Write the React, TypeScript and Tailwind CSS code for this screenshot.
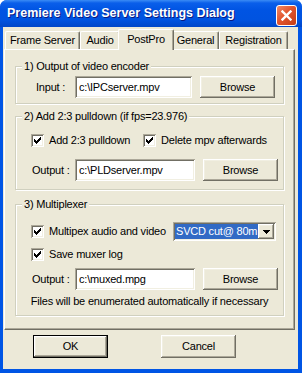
import React from "react";

const raised =
  "bg-[#ece9d8] shadow-[inset_-1px_-1px_0_#716f64,inset_1px_1px_0_#fff,inset_-2px_-2px_0_#aca899,inset_2px_2px_0_#f1efe2]";
const sunken =
  "bg-white shadow-[inset_1px_1px_0_#aca899,inset_-1px_-1px_0_#fff,inset_2px_2px_0_#716f64,inset_-2px_-2px_0_#f1efe2]";

const Check = () => (
  <span className={`w-[13px] h-[13px] flex items-center justify-center shrink-0 ${sunken}`}>
    <svg width="7" height="7" viewBox="0 0 7 7" shapeRendering="crispEdges">
      <path d="M6 0h1v3h-1v1h-1v1h-1v1h-1v1h-1v-1h-1v-1h-1v-3h1v1h1v1h1v-1h1v-1h1z" fill="#000" />
    </svg>
  </span>
);

const Button = ({ children, className = "" }: { children: React.ReactNode; className?: string }) => (
  <div className={`w-[75px] flex items-center justify-center shrink-0 ${raised} ${className}`}>
    {children}
  </div>
);

const TextBox = ({ value, className = "" }: { value: string; className?: string }) => (
  <div className={`h-[22px] flex items-center pl-[4px] shrink-0 ${sunken} ${className}`}>{value}</div>
);

const Group = ({ title, className = "", children }: { title: string; className?: string; children: React.ReactNode }) => (
  <fieldset
    className={`mx-[10px] border border-[#d0d0bf] shadow-[inset_1px_1px_0_#fff,1px_1px_0_#fff] ${className}`}
  >
    <legend className="ml-[6px] px-[2px] bg-[#ece9d8] leading-[13px]">{title}</legend>
    {children}
  </fieldset>
);

const OutputRow = ({ value, className = "" }: { value: string; className?: string }) => (
  <div className={`flex items-center pl-[16px] ${className}`}>
    <span className="w-[43px]">Output :</span>
    <TextBox value={value} className="w-[120px]" />
    <Button className="ml-[8px] h-[22px]">Browse</Button>
  </div>
);

const tabs = ["Frame Server", "Audio", "PostPro", "General", "Registration"];
const tabWidths = ["w-[75px]", "w-[40px]", "w-[56px]", "w-[47px]", "w-[69px]"];

export default function App() {
  return (
    <div className="w-[302px] h-[373px] flex flex-col bg-[#0055e5] rounded-t-[7px] overflow-hidden font-['Liberation_Sans',Arial,sans-serif] text-[11px] text-black">
      {/* title bar */}
      <div className="h-[27px] flex justify-between pl-[7px] pr-[5px] bg-[linear-gradient(to_bottom,#3b8cf5_0px,#0a5fea_3px,#0054e3_10px,#0053e0_20px,#0046c8_27px)]">
        <span className="self-center text-white font-bold text-[12.5px] [text-shadow:1px_1px_0_#0a1a80]">
          Premiere Video Server Settings Dialog
        </span>
        <div className="mt-[5px] w-[21px] h-[21px] rounded-[3px] border border-white bg-[linear-gradient(135deg,#f08a66,#e2552e_45%,#c53d16)] flex items-center justify-center">
          <svg width="11" height="11" viewBox="0 0 11 11">
            <path d="M1.5 1.5l8 8M9.5 1.5l-8 8" stroke="#fff" strokeWidth="2.4" strokeLinecap="square" />
          </svg>
        </div>
      </div>

      {/* client area */}
      <div className="flex-1 ml-[3px] mr-[4px] mb-[4px] bg-[#ece9d8] flex flex-col tracking-[-0.2px]">
        {/* tab strip */}
        <div className="mt-[2px] ml-[2px] h-[20px] flex items-end">
          {tabs.map((t, i) =>
            t === "PostPro" ? (
              <div
                key={t}
                className={`relative z-10 -mx-[2px] mb-[-1px] h-[21px] ${tabWidths[i]} bg-[#ece9d8] border-t border-l border-white border-r border-r-[#716f64] shadow-[inset_-1px_0_0_#aca899] rounded-t-[2px] flex justify-center pt-[3px] leading-[13px]`}
              >
                {t}
              </div>
            ) : (
              <div
                key={t}
                className={`h-[18px] ${tabWidths[i]} border-t border-l border-white border-r border-r-[#716f64] shadow-[inset_-1px_0_0_#aca899] rounded-t-[2px] flex justify-center pt-[2px] leading-[13px]`}
              >
                {t}
              </div>
            )
          )}
        </div>

        {/* tab panel */}
        <div className="ml-[1px] w-[291px] h-[281px] border-t border-l border-white border-r border-b border-r-[#716f64] border-b-[#716f64] shadow-[inset_-1px_-1px_0_#aca899] flex flex-col pt-[10px]">
          <Group title="1) Output of video encoder">
            <div className="flex items-center pt-[3px] pb-[5px] pl-[20px]">
              <span className="w-[39px]">Input :</span>
              <TextBox value={"c:\\IPCserver.mpv"} className="w-[117px]" />
              <Button className="ml-[8px] h-[22px]">Browse</Button>
            </div>
          </Group>

          <Group title="2) Add 2:3 pulldown (if fps=23.976)" className="mt-[6px]">
            <div className="flex items-center pt-[11px] pl-[15px] leading-[13px]">
              <label className="w-[112px] flex items-center gap-[5px]">
                <Check />
                Add 2:3 pulldown
              </label>
              <label className="flex items-center gap-[5px]">
                <Check />
                Delete mpv afterwards
              </label>
            </div>
            <OutputRow value={"c:\\PLDserver.mpv"} className="mt-[12px] pb-[8px]" />
          </Group>

          <Group title="3) Multiplexer" className="mt-[8px]">
            <div className="flex items-center pt-[11px] pl-[15px] leading-[13px]">
              <label className="w-[142px] flex items-center gap-[5px]">
                <Check />
                Multipex audio and video
              </label>
              <div className={`w-[103px] h-[19px] p-[2px] flex ${sunken}`}>
                <div className="flex-1 bg-[#316ac5] text-white pl-[1px] leading-[15px] overflow-hidden whitespace-nowrap">
                  SVCD cut@ 80m
                </div>
                <div className={`w-[16px] h-[15px] flex items-center justify-center ${raised}`}>
                  <svg width="7" height="4" viewBox="0 0 7 4" shapeRendering="crispEdges">
                    <path d="M0 0h7v1h-1v1h-1v1h-1v1h-1v-1h-1v-1h-1v-1h-1z" fill="#000" />
                  </svg>
                </div>
              </div>
            </div>
            <div className="flex items-center mt-[7px] pl-[15px] leading-[13px]">
              <label className="flex items-center gap-[5px]">
                <Check />
                Save muxer log
              </label>
            </div>
            <OutputRow value={"c:\\muxed.mpg"} className="mt-[7px]" />
            <div className="mt-[5px] pb-[7px] text-center leading-[13px]">
              Files will be enumerated automatically if necessary
            </div>
          </Group>
        </div>

        {/* dialog buttons */}
        <div className="flex mt-[5px] ml-[30px] gap-[53px]">
          <Button className="h-[23px] border border-black">OK</Button>
          <Button className="h-[23px]">Cancel</Button>
        </div>
      </div>
    </div>
  );
}
